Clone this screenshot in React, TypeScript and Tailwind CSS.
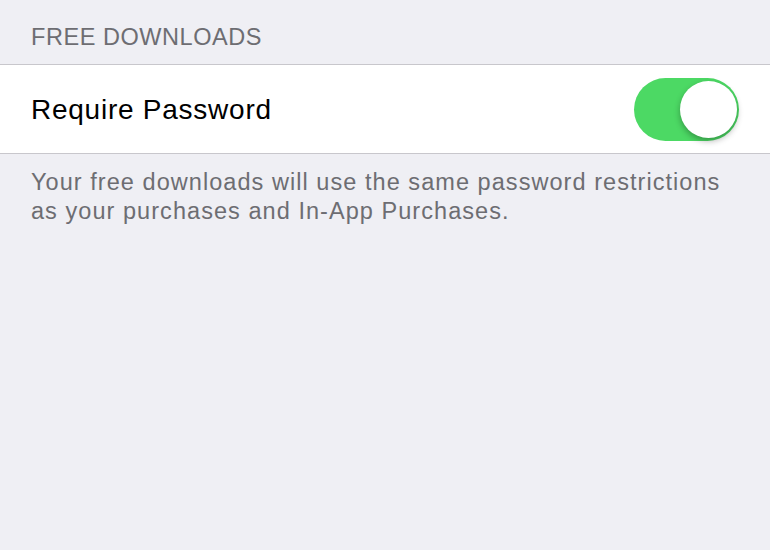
export default function App() {
  return (
    <div className="w-[770px] h-[550px] bg-[#efeff4] font-['Liberation_Sans',Arial,sans-serif] overflow-hidden">
      <div className="h-[64px] px-[31px] pt-[23px] text-[23.5px] leading-[28px] text-[#6d6d72] tracking-[0.55px]">
        FREE DOWNLOADS
      </div>
      <div className="h-[90px] bg-white border-y border-[#c8c7cc] flex items-center justify-between pl-[31px] pr-[31px]">
        <span className="text-[28px] tracking-[0.75px] text-black pt-[2px]">Require Password</span>
        <div className="relative w-[105px] h-[63px] rounded-full bg-[#4cd964]">
          <div className="absolute right-[2px] top-[3px] w-[57px] h-[57px] rounded-full bg-white shadow-[0_3px_6px_rgba(0,0,0,0.3)]" />
        </div>
      </div>
      <p className="px-[31px] pt-[14px] text-[23.5px] leading-[29px] tracking-[1.05px] text-[#6d6d72] whitespace-nowrap">
        Your free downloads will use the same password restrictions
        <br />
        as your purchases and In-App Purchases.
      </p>
    </div>
  );
}
